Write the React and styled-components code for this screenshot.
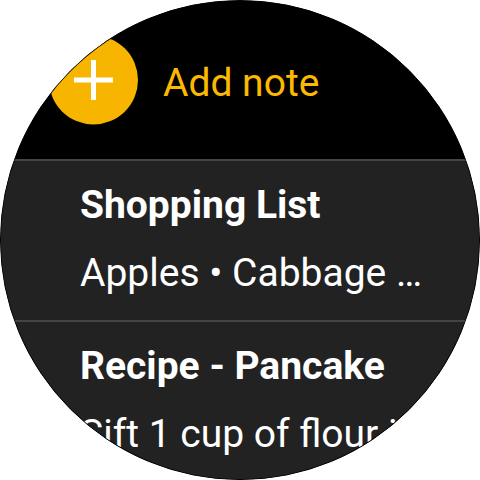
import React from 'react';
import styled, { createGlobalStyle } from 'styled-components';

const GlobalStyle = createGlobalStyle`
  * {
    box-sizing: border-box;
  }
  body {
    margin: 0;
    background: #fff;
    font-family: Roboto, "Liberation Sans", sans-serif;
  }
`

const WatchFace = styled.main`
  width: 100%;
  max-width: 100vh;
  aspect-ratio: 1;
  overflow: hidden;
  border: 1px solid #000;
  border-radius: 50%;
  background: #000;
`

const AddNoteBtn = styled.button`
  display: flex;
  align-items: center;
  gap: 25px;
  width: 100%;
  height: 158px;
  padding: 0 48px;
  border: 0;
  background: #000;
  color: #fcb900;
  font: inherit;
  font-size: 39px;
  text-align: left;
  cursor: pointer;
`

const AddIcon = styled.svg`
  flex: none;
  width: 89px;
  height: 89px;
`

const AddLabel = styled.span`
  padding-top: 6px;
`

const NoteList = styled.ul`
  margin: 0;
  padding: 0;
  list-style: none;
`

const Note = styled.li`
  height: 161px;
  padding: 20px 48px 0 79px;
  border-top: 2px solid #444;
  background: #222;
  color: #fff;
`

const Title = styled.h2`
  margin: 0 0 20px;
  font-size: 39px;
  font-weight: 700;
  line-height: 48px;
  white-space: nowrap;
`

const Preview = styled.p`
  margin: 0;
  font-size: 39px;
  line-height: 48px;
  white-space: nowrap;
`

const notes = [
  { title: 'Shopping List', preview: 'Apples • Cabbage …' },
  { title: 'Recipe - Pancake', preview: 'Sift 1 cup of flour i…' },
]

function App() {
  return (
    <>
      <GlobalStyle />
      <WatchFace>
        <AddNoteBtn type="button">
          <AddIcon viewBox="0 0 89 89" aria-hidden="true">
            <circle cx="44.5" cy="44" r="44.5" fill="#f7b500" />
            <path d="M25 44h39M44.5 24v40" stroke="#fff" strokeWidth="5" />
          </AddIcon>
          <AddLabel>Add note</AddLabel>
        </AddNoteBtn>
        <NoteList>
          {notes.map((note) => (
            <Note key={note.title}>
              <Title>{note.title}</Title>
              <Preview>{note.preview}</Preview>
            </Note>
          ))}
        </NoteList>
      </WatchFace>
    </>
  );
}

export default App;
